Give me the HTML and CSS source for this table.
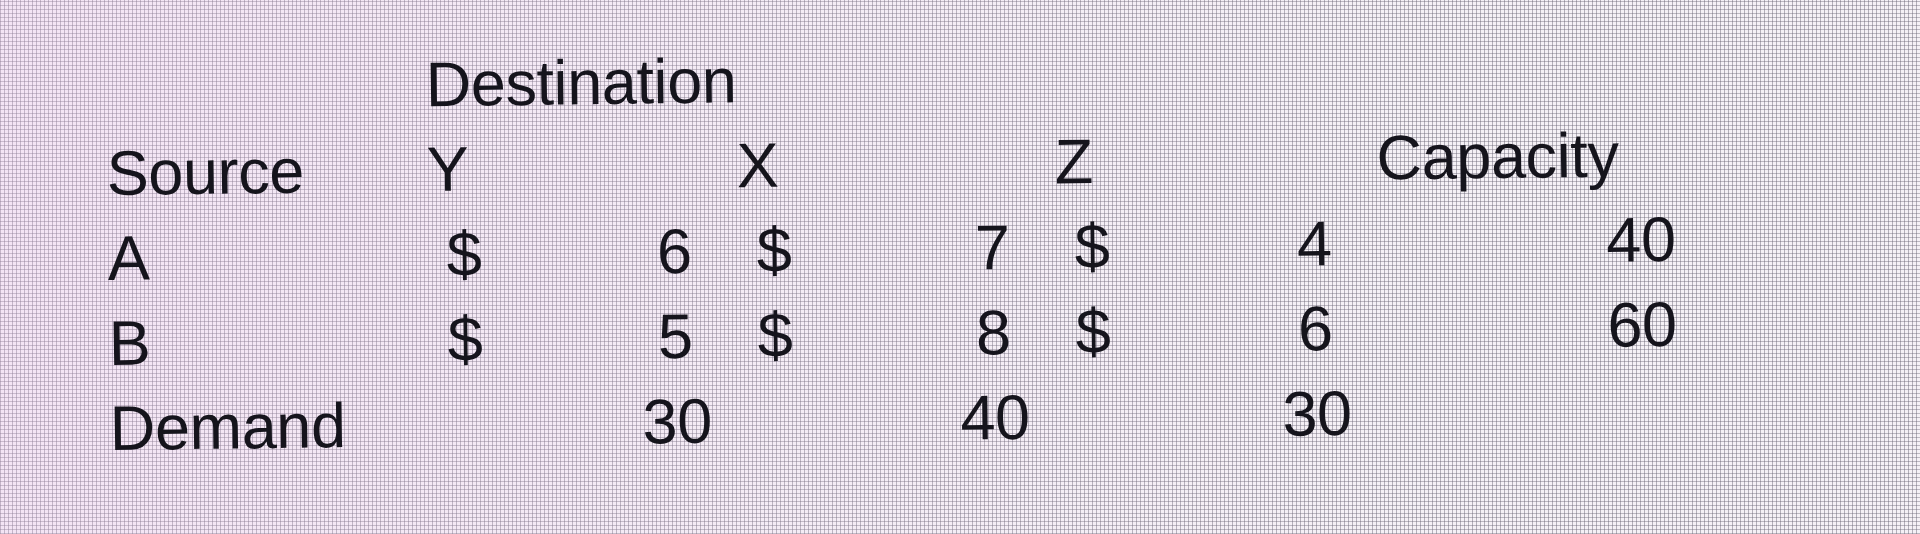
FILE: index.html
```html
<!DOCTYPE html>
<html lang="en">
<head>
<meta charset="utf-8">
<title>Transportation table</title>
<link rel="stylesheet" href="styles.css">
</head>
<body>
<div class="screen">
  <div class="sheet">
    <div class="cell"></div>
    <div class="cell">Destination</div>
    <div class="cell"></div>
    <div class="cell"></div>
    <div class="cell"></div>

    <div class="cell">Source</div>
    <div class="cell">Y</div>
    <div class="cell">X</div>
    <div class="cell">Z</div>
    <div class="cell">Capacity</div>

    <div class="cell">A</div>
    <div class="cell acct"><span>$</span><span>6</span></div>
    <div class="cell acct"><span>$</span><span>7</span></div>
    <div class="cell acct"><span>$</span><span>4</span></div>
    <div class="cell num">40</div>

    <div class="cell">B</div>
    <div class="cell acct"><span>$</span><span>5</span></div>
    <div class="cell acct"><span>$</span><span>8</span></div>
    <div class="cell acct"><span>$</span><span>6</span></div>
    <div class="cell num">60</div>

    <div class="cell">Demand</div>
    <div class="cell num">30</div>
    <div class="cell num">40</div>
    <div class="cell num">30</div>
    <div class="cell"></div>
  </div>
</div>
</body>
</html>
```

FILE: styles.css
```css
html, body {
  margin: 0;
  padding: 0;
}

body {
  width: 1920px;
  height: 534px;
  overflow: hidden;
  background-color: #f5f1f6;
  background-image:
    linear-gradient(90deg, rgba(240, 195, 240, 0.28) 0%, rgba(240, 205, 240, 0.14) 40%, rgba(225, 225, 235, 0) 75%),
    repeating-linear-gradient(90deg, rgba(100, 96, 112, 0.45) 0 1px, transparent 1px 4px),
    repeating-linear-gradient(0deg, rgba(100, 96, 112, 0.4) 0 1px, transparent 1px 4px);
  font-family: "Liberation Sans", Arial, sans-serif;
  color: #15141c;
}

.screen {
  width: 1920px;
  height: 534px;
}

.sheet {
  display: grid;
  grid-template-columns: 320px 310px 318px 322px 326px;
  grid-auto-rows: 85px;
  padding: 46px 0 0 94px;
  font-size: 63px;
  line-height: 85px;
  letter-spacing: -0.4px;
  transform: rotate(-0.7deg);
  transform-origin: 110px 280px;
}

.cell {
  padding: 0 14px;
  white-space: nowrap;
}

.num {
  text-align: right;
}

.acct {
  display: flex;
  justify-content: space-between;
  padding: 0 32px 0 33px;
}
```
